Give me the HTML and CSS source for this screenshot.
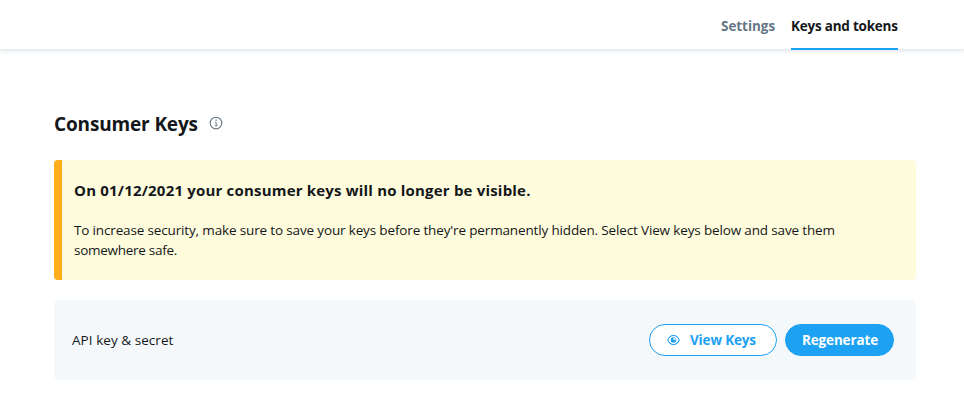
FILE: index.html
```html
<!DOCTYPE html>
<html lang="en">
<head>
<meta charset="utf-8">
<title>Keys and tokens</title>
<link rel="stylesheet" href="styles.css">
</head>
<body>
<header class="topbar">
  <nav class="tabs">
    <a class="tab"><span class="tab-label settings">Settings</span></a>
    <a class="tab active"><span class="tab-label keys">Keys and tokens</span></a>
  </nav>
</header>
<main class="content">
  <div class="heading">
    <h1 class="title">Consumer Keys</h1>
    <svg class="info" viewBox="0 0 14 14" fill="none" stroke="#657786"><circle cx="7" cy="7" r="5.800" stroke-width="1.150"/><path d="M6 6.300h1.200v3.500M6 9.700h2.500" stroke-width=".9"/><circle cx="7.100" cy="4.300" r=".8" fill="#657786" stroke="none"/></svg>
  </div>
  <section class="notice">
    <h2 class="notice-title">On 01/12/2021 your consumer keys will no longer be visible.</h2>
    <p class="notice-text"><span class="line-one">To increase security, make sure to save your keys before they're permanently hidden. Select View keys below and save them</span><br><span class="line-two">somewhere safe.</span></p>
  </section>
  <section class="key-row">
    <span class="key-label">API key &amp; secret</span>
    <div class="actions">
      <button class="button outline"><svg class="eye" viewBox="0 0 14 12" fill="none" stroke="#1da1f2"><path d="M.8 6C2.100 2.800 4.300 1.200 7 1.200S11.900 2.800 13.200 6C11.900 9.200 9.700 10.800 7 10.800S2.100 9.200.8 6Z" stroke-width="1.1"/><path d="M7 3A3 3 0 1 0 10 6H7Z" fill="#1da1f2" stroke="none"/><path d="M7 3.200A2.800 2.800 0 0 1 9.800 6" stroke-width=".6"/></svg><span class="view-label">View Keys</span></button>
      <button class="button solid"><span class="regen-label">Regenerate</span></button>
    </div>
  </section>
</main>
</body>
</html>
```
FILE: styles.css
```css
* {
  box-sizing: border-box;
}

body {
  margin: 0;
  min-height: 415px;
  background: #fff;
  color: #14171a;
  font: 13.5px/20px "Segoe UI", "Open Sans", "Noto Sans", sans-serif;
}

.topbar {
  height: 50px;
  padding-right: 66px;
  border-bottom: 1px solid #e6ecf0;
  box-shadow: 0 1px 4px rgba(101, 119, 134, .2);
}

.tabs {
  display: flex;
  justify-content: flex-end;
  gap: 16px;
  height: 50px;
}

.tab {
  padding-top: 16px;
  color: #657786;
  font-weight: 700;
  white-space: nowrap;
}

.settings {
  display: block;
  width: 54px;
  letter-spacing: -.05px;
}

.keys {
  display: block;
  width: 107px;
  letter-spacing: -.22px;
}

.active {
  color: #14171a;
  border-bottom: 2px solid #1da1f2;
}

.content {
  width: 862px;
  margin: 60px 0 0 54px;
}

.heading {
  display: flex;
  align-items: center;
  height: 28px;
}

.title {
  width: 155px;
  margin: 0;
  font-size: 19px;
  font-weight: 700;
  letter-spacing: -.15px;
  line-height: 28px;
  white-space: nowrap;
}

.info {
  width: 14px;
  height: 14px;
  margin-top: -2px;
}

.notice {
  height: 120px;
  margin-top: 22px;
  padding: 20px 12px;
  border-left: 8px solid #ffad1f;
  border-radius: 4px;
  background: #fffcdd;
}

.notice-title {
  margin: 0 0 20px;
  font-size: 15px;
  font-weight: 700;
  letter-spacing: .19px;
  line-height: 20px;
  white-space: nowrap;
}

.notice-text {
  margin: 0;
  white-space: nowrap;
}

.line-one {
  letter-spacing: -.15px;
}

.line-two {
  letter-spacing: -.27px;
}

.key-row {
  display: flex;
  align-items: center;
  justify-content: space-between;
  height: 80px;
  margin-top: 20px;
  padding: 0 22px 0 18px;
  border-radius: 5px;
  background: #f5f8fa;
}

.key-label {
  letter-spacing: .05px;
}

.actions {
  display: flex;
  gap: 8px;
}

.button {
  display: flex;
  align-items: center;
  height: 32px;
  padding: 0 16px;
  border: 1px solid #1da1f2;
  border-radius: 16px;
  font: inherit;
  font-weight: 700;
  letter-spacing: -.15px;
  white-space: nowrap;
}

.outline {
  width: 128px;
  padding-left: 17px;
  background: #fff;
  color: #1da1f2;
}

.solid {
  width: 109px;
  background: #1da1f2;
  color: #fff;
}

.eye {
  flex: none;
  width: 13px;
  height: 12px;
  margin-right: 10px;
}
```
